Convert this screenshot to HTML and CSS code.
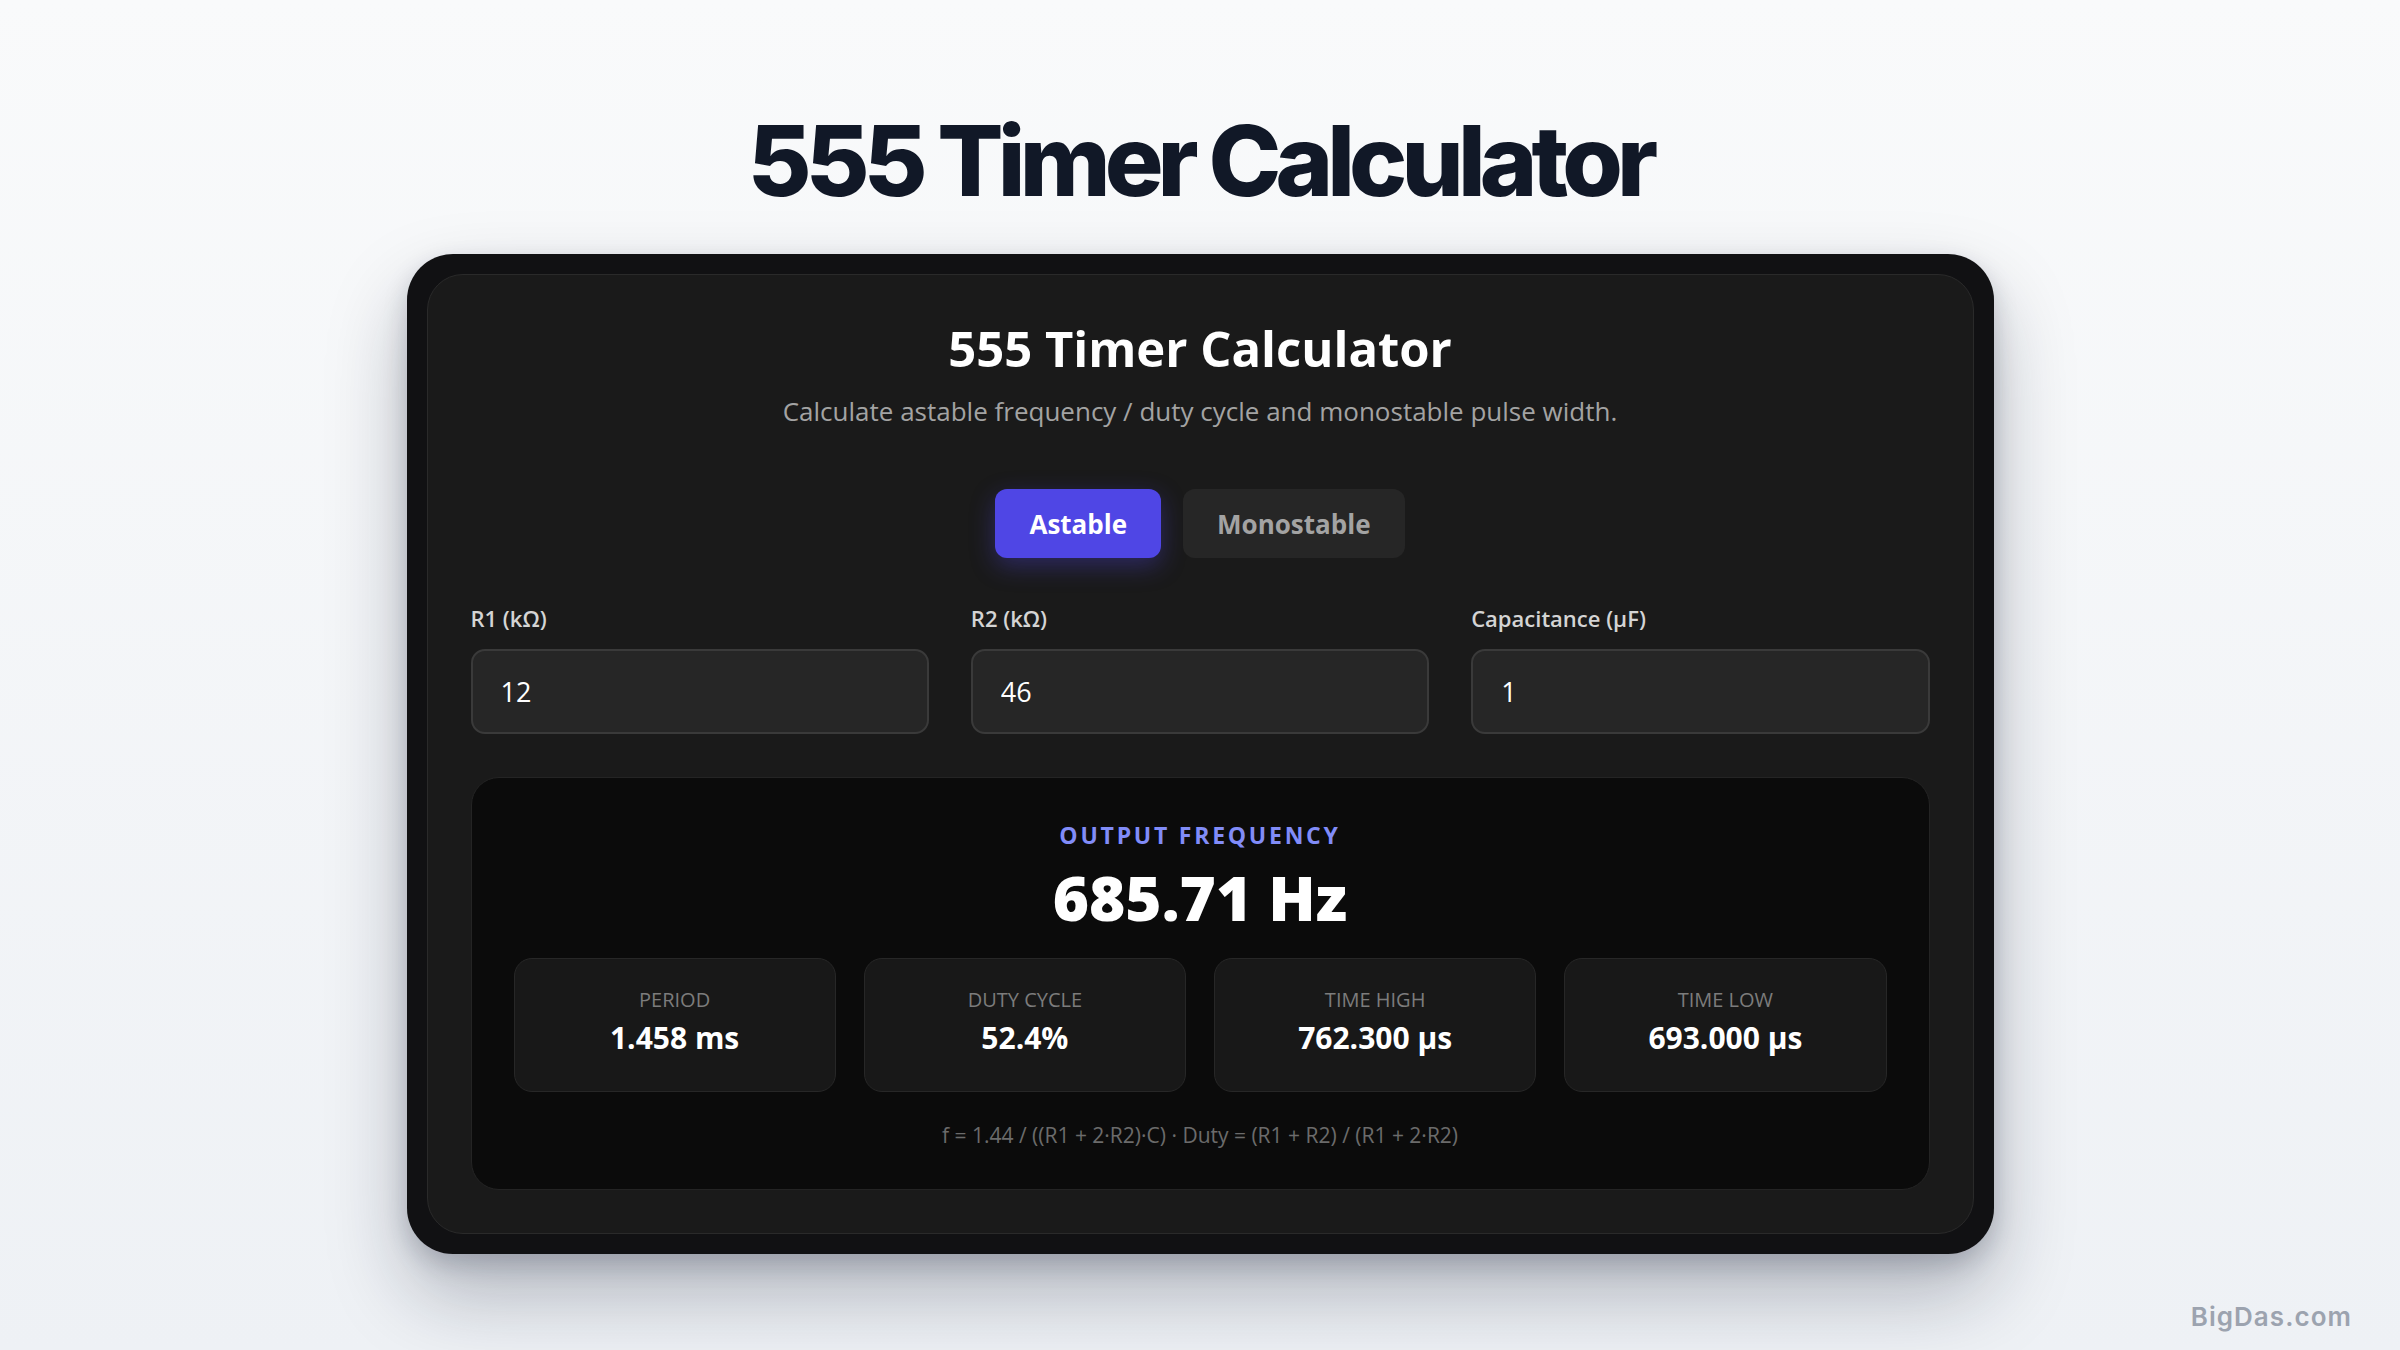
FILE: index.html
```html
<!DOCTYPE html>
<html lang="en">
<head>
  <meta charset="UTF-8" />
  <title>555 Timer Calculator</title>
  <link rel="stylesheet" href="styles.css">
</head>
<body>

<h1 class="page-title">555 Timer Calculator</h1>

<!-- Calculator -->
<div class="frame">
  <div class="card">
    <h2 class="card-title">555 Timer Calculator</h2>
    <p class="card-sub">Calculate astable frequency / duty cycle and monostable pulse width.</p>

    <div class="tabs">
      <button class="tab active">Astable</button>
      <button class="tab">Monostable</button>
    </div>

    <div class="fields">
      <label class="field">
        <span class="field-label">R1 (kΩ)</span>
        <input type="text" value="12">
      </label>
      <label class="field">
        <span class="field-label">R2 (kΩ)</span>
        <input type="text" value="46">
      </label>
      <label class="field">
        <span class="field-label">Capacitance (µF)</span>
        <input type="text" value="1">
      </label>
    </div>

    <div class="result">
      <div class="result-label">OUTPUT FREQUENCY</div>
      <div class="result-value">685.71 Hz</div>

      <div class="stats">
        <div class="stat">
          <div class="stat-label">PERIOD</div>
          <div class="stat-value">1.458 ms</div>
        </div>
        <div class="stat">
          <div class="stat-label">DUTY CYCLE</div>
          <div class="stat-value">52.4%</div>
        </div>
        <div class="stat">
          <div class="stat-label">TIME HIGH</div>
          <div class="stat-value">762.300 µs</div>
        </div>
        <div class="stat">
          <div class="stat-label">TIME LOW</div>
          <div class="stat-value">693.000 µs</div>
        </div>
      </div>

      <div class="formula">f = 1.44 / ((R1 + 2·R2)·C) · Duty = (R1 + R2) / (R1 + 2·R2)</div>
    </div>
  </div>
</div>

<div class="watermark">BigDas.com</div>

</body>
</html>
```

FILE: styles.css
```css
body {
  margin: 0;
  min-height: 1350px;
  background: linear-gradient(180deg, #f9fafb 0%, #eef1f5 100%);
  font-family: 'Open Sans', 'Noto Sans', sans-serif;
  position: relative;
  overflow: hidden;
}

.page-title {
  margin: 0;
  padding-top: 112px;
  font-family: 'Inter', sans-serif;
  font-size: 98px;
  line-height: 1;
  font-weight: 800;
  letter-spacing: -0.06em;
  color: #111827;
  text-align: center;
}

.frame {
  width: 1547px;
  margin: 44px auto 0;
  padding: 20px;
  background: #111113;
  border-radius: 46px;
  box-shadow: 0 40px 80px rgba(15, 23, 42, 0.28), 0 10px 24px rgba(15, 23, 42, 0.18);
}

.card {
  background: #1a1a1a;
  border: 1px solid #2a2a2a;
  border-radius: 36px;
  padding: 44px 43px 43px;
  text-align: center;
}

.card-title {
  margin: 0;
  font-size: 49px;
  line-height: 1.2;
  font-weight: 700;
  color: #fff;
}

.card-sub {
  margin: 15px 0 0;
  font-size: 26px;
  line-height: 1.4;
  color: #a3a3a3;
}

.tabs {
  display: flex;
  justify-content: center;
  gap: 22px;
  margin-top: 60px;
}

.tab {
  height: 69px;
  padding: 0 34px;
  border: none;
  border-radius: 12px;
  background: #262626;
  color: #a3a3a3;
  font-family: 'Open Sans', sans-serif;
  font-size: 26px;
  font-weight: 700;
  cursor: pointer;
}

.tab.active {
  background: #4f46e5;
  color: #fff;
  box-shadow: 0 8px 24px rgba(79, 70, 229, 0.35);
}

.fields {
  display: grid;
  grid-template-columns: repeat(3, 1fr);
  gap: 42px;
  margin-top: 46px;
  text-align: left;
}

.field {
  display: flex;
  flex-direction: column;
  gap: 16px;
}

.field-label {
  font-size: 22px;
  line-height: 1.3;
  font-weight: 600;
  color: #d4d4d4;
}

.field input {
  box-sizing: border-box;
  width: 100%;
  height: 85px;
  padding: 0 28px;
  background: #262626;
  border: 2px solid #3a3a3a;
  border-radius: 14px;
  color: #fff;
  font-family: 'Open Sans', sans-serif;
  font-size: 27px;
  outline: none;
}

.result {
  margin-top: 43px;
  padding: 43px 42px 40px;
  background: #0b0b0b;
  border: 1px solid #242424;
  border-radius: 28px;
}

.result-label {
  font-size: 23px;
  line-height: 1.3;
  font-weight: 700;
  letter-spacing: 0.12em;
  color: #818cf8;
}

.result-value {
  margin-top: 9px;
  font-size: 62px;
  line-height: 1.2;
  font-weight: 800;
  color: #fff;
}

.stats {
  display: grid;
  grid-template-columns: repeat(4, 1fr);
  gap: 28px;
  margin-top: 24px;
}

.stat {
  height: 134px;
  box-sizing: border-box;
  padding-top: 28px;
  background: #181818;
  border: 1px solid #272727;
  border-radius: 18px;
}

.stat-label {
  font-size: 20px;
  line-height: 1.3;
  color: #7c7c7c;
}

.stat-value {
  margin-top: 5px;
  font-size: 30px;
  line-height: 1.3;
  font-weight: 700;
  color: #fff;
}

.formula {
  margin-top: 30px;
  font-size: 21px;
  line-height: 1.3;
  color: #6b6b6b;
}

.watermark {
  position: absolute;
  right: 48px;
  bottom: 18px;
  font-family: 'Inter', sans-serif;
  font-size: 26px;
  font-weight: 600;
  letter-spacing: 0.04em;
  color: #9ca3af;
}
```
